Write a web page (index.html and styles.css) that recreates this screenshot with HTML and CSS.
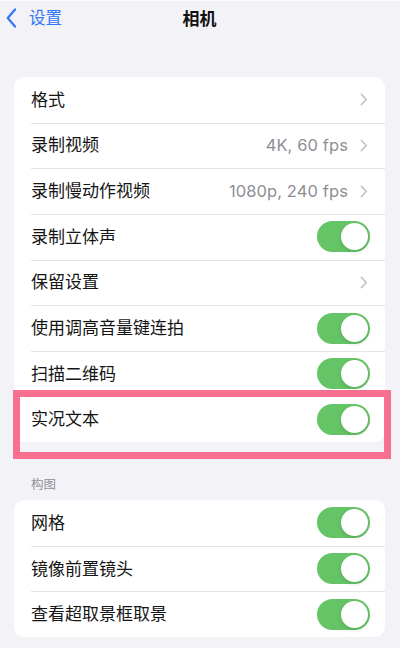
FILE: index.html
```html
<!DOCTYPE html>
<html lang="zh-CN">
<head>
<meta charset="utf-8">
<link rel="stylesheet" href="styles.css">
</head>
<body>
<div class="screen">
  <header class="nav">
    <div class="back">
      <svg class="back-icon" width="11" height="20" viewBox="0 0 11 20"><path d="M9 1.5 L1.8 10 L9 18.5" fill="none" stroke="#3478f6" stroke-width="2.3" stroke-linecap="round" stroke-linejoin="round"/></svg>
      <span class="back-text">设置</span>
    </div>
    <div class="title">相机</div>
  </header>

  <div class="card first">
    <div class="row"><span class="label">格式</span><span class="right"><svg class="chev" width="8" height="13" viewBox="0 0 8 13"><path d="M1.5 1.5 L6.3 6.5 L1.5 11.5" fill="none" stroke="#c4c4c8" stroke-width="1.8" stroke-linecap="round" stroke-linejoin="round"/></svg></span></div>
    <div class="row"><span class="label">录制视频</span><span class="right"><span class="value">4K, 60 fps</span><svg class="chev" width="8" height="13" viewBox="0 0 8 13"><path d="M1.5 1.5 L6.3 6.5 L1.5 11.5" fill="none" stroke="#c4c4c8" stroke-width="1.8" stroke-linecap="round" stroke-linejoin="round"/></svg></span></div>
    <div class="row"><span class="label">录制慢动作视频</span><span class="right"><span class="value">1080p, 240 fps</span><svg class="chev" width="8" height="13" viewBox="0 0 8 13"><path d="M1.5 1.5 L6.3 6.5 L1.5 11.5" fill="none" stroke="#c4c4c8" stroke-width="1.8" stroke-linecap="round" stroke-linejoin="round"/></svg></span></div>
    <div class="row"><span class="label">录制立体声</span><span class="toggle"><span class="knob"></span></span></div>
    <div class="row"><span class="label">保留设置</span><span class="right"><svg class="chev" width="8" height="13" viewBox="0 0 8 13"><path d="M1.5 1.5 L6.3 6.5 L1.5 11.5" fill="none" stroke="#c4c4c8" stroke-width="1.8" stroke-linecap="round" stroke-linejoin="round"/></svg></span></div>
    <div class="row"><span class="label">使用调高音量键连拍</span><span class="toggle"><span class="knob"></span></span></div>
    <div class="row"><span class="label">扫描二维码</span><span class="toggle"><span class="knob"></span></span></div>
    <div class="row"><span class="label">实况文本</span><span class="toggle"><span class="knob"></span></span></div>
  </div>

  <div class="section-title">构图</div>

  <div class="card">
    <div class="row"><span class="label">网格</span><span class="toggle"><span class="knob"></span></span></div>
    <div class="row"><span class="label">镜像前置镜头</span><span class="toggle"><span class="knob"></span></span></div>
    <div class="row"><span class="label">查看超取景框取景</span><span class="toggle"><span class="knob"></span></span></div>
  </div>

  <div class="highlight"></div>
</div>
</body>
</html>
```

FILE: styles.css
```css
* { box-sizing: border-box; }
html, body {
  margin: 0;
  padding: 0;
  background: #f2f2f7;
}
body {
  font-family: Inter, "Noto Sans CJK SC", sans-serif;
  color: #111;
  width: 400px;
  height: 648px;
  overflow: hidden;
}
.screen {
  position: relative;
  width: 400px;
  height: 648px;
  padding: 0 15px 0 14px;
  border-top: 1px solid #fbfbfd;
}
.nav {
  position: relative;
  height: 35px;
  display: flex;
  align-items: center;
  justify-content: center;
}
.back {
  position: absolute;
  left: -8px;
  top: 7px;
  display: flex;
  align-items: center;
  gap: 12px;
  color: #3478f6;
}
.back-icon { display: block; }
.back-text {
  font-size: 16.5px;
  line-height: 20px;
}
.title {
  font-size: 17px;
  font-weight: 600;
  line-height: 20px;
  color: #111;
}
.card {
  background: #fff;
  border-radius: 10px;
  overflow: hidden;
}
.card.first {
  margin-top: 41px;
}
.row {
  position: relative;
  height: 45.65px;
  display: flex;
  align-items: center;
  justify-content: space-between;
  padding: 0 15px 0 17px;
}
.row + .row::before {
  content: "";
  position: absolute;
  top: 0;
  left: 17px;
  right: 0;
  height: 1px;
  background: #e4e4e7;
}
.label {
  font-size: 17px;
  line-height: 22px;
  color: #151515;
}
.right {
  display: flex;
  align-items: center;
  gap: 12px;
  padding-right: 2px;
}
.value {
  font-size: 16.5px;
  color: #8e8e93;
  letter-spacing: 0.1px;
}
.chev { display: block; }
.toggle {
  position: relative;
  width: 53px;
  height: 31px;
  border-radius: 16px;
  background: #65c466;
}
.knob {
  position: absolute;
  right: 2px;
  top: 2px;
  width: 27px;
  height: 27px;
  border-radius: 50%;
  background: #fff;
  box-shadow: 0 2px 4px rgba(0,0,0,0.12);
}
.section-title {
  font-size: 12.5px;
  line-height: 16px;
  color: #8e8e93;
  padding: 35px 0 0 17px;
  height: 58px;
}
.highlight {
  position: absolute;
  left: 13px;
  top: 389px;
  width: 378px;
  height: 69px;
  border: 7px solid #f7708f;
  pointer-events: none;
}
```
